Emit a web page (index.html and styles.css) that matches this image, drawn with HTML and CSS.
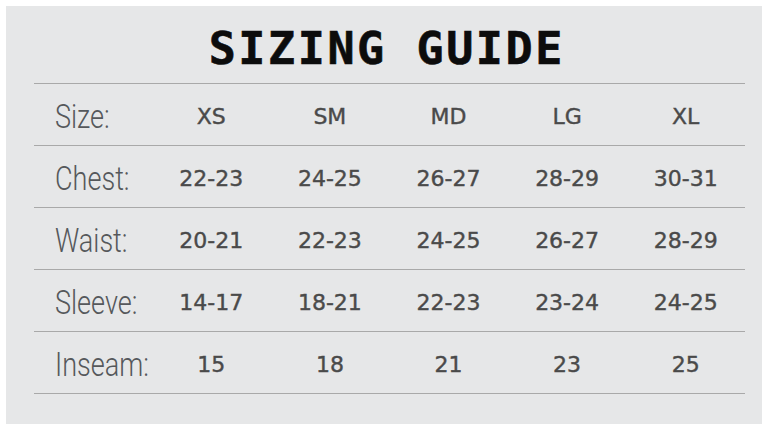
FILE: index.html
```html
<!DOCTYPE html>
<html>
<head>
<meta charset="utf-8">
<link rel="stylesheet" href="styles.css">
</head>
<body>
<div class="panel">
  <h1 class="title"><span class="title-text">SIZING GUIDE</span></h1>
  <div class="table">
    <div class="row">
      <div class="label"><span class="narrow">Size:</span></div>
      <div class="val">XS</div><div class="val">SM</div><div class="val">MD</div><div class="val">LG</div><div class="val">XL</div>
    </div>
    <div class="row">
      <div class="label"><span class="narrow">Chest:</span></div>
      <div class="val">22-23</div><div class="val">24-25</div><div class="val">26-27</div><div class="val">28-29</div><div class="val">30-31</div>
    </div>
    <div class="row">
      <div class="label"><span class="narrow">Waist:</span></div>
      <div class="val">20-21</div><div class="val">22-23</div><div class="val">24-25</div><div class="val">26-27</div><div class="val">28-29</div>
    </div>
    <div class="row">
      <div class="label"><span class="narrow">Sleeve:</span></div>
      <div class="val">14-17</div><div class="val">18-21</div><div class="val">22-23</div><div class="val">23-24</div><div class="val">24-25</div>
    </div>
    <div class="row">
      <div class="label"><span class="narrow">Inseam:</span></div>
      <div class="val">15</div><div class="val">18</div><div class="val">21</div><div class="val">23</div><div class="val">25</div>
    </div>
  </div>
</div>
</body>
</html>
```
FILE: styles.css
```css
html, body {
  margin: 0;
  padding: 0;
  background: #ffffff;
}
body {
  width: 770px;
  height: 433px;
  overflow: hidden;
}
.panel {
  margin: 6px 0 0 6px;
  width: 756px;
  height: 418px;
  box-sizing: border-box;
  background: #e6e7e8;
  padding: 0 17px 0 28px;
}
.narrow {
  display: inline-block;
  transform: scaleX(0.82);
  transform-origin: left center;
}
.title {
  margin: 0;
  height: 78px;
  box-sizing: border-box;
  padding: 18px 8px 0 0;
  border-bottom: 1px solid #a9a9a9;
  text-align: center;
  font-family: "DejaVu Sans Mono", monospace;
  font-weight: bold;
  font-size: 45px;
  line-height: 50px;
  color: #0c0c0c;
}
.title-text {
  letter-spacing: 2.6px;
  margin-right: -2.6px;
  -webkit-text-stroke: 0.6px #0c0c0c;
}
.row {
  display: grid;
  grid-template-columns: 118px repeat(5, 1fr);
  align-items: center;
  height: 62px;
  box-sizing: border-box;
  border-bottom: 1px solid #a9a9a9;
}
.label {
  padding-left: 21px;
  padding-top: 4px;
  font-family: Roboto, "Liberation Sans", sans-serif;
  font-weight: 300;
  font-size: 33px;
  color: #55585b;
}
.val {
  text-align: center;
  padding-top: 4px;
  font-family: "DejaVu Sans", sans-serif;
  font-size: 22px;
  color: #4a4a4a;
  -webkit-text-stroke: 0.4px #4a4a4a;
}
```
